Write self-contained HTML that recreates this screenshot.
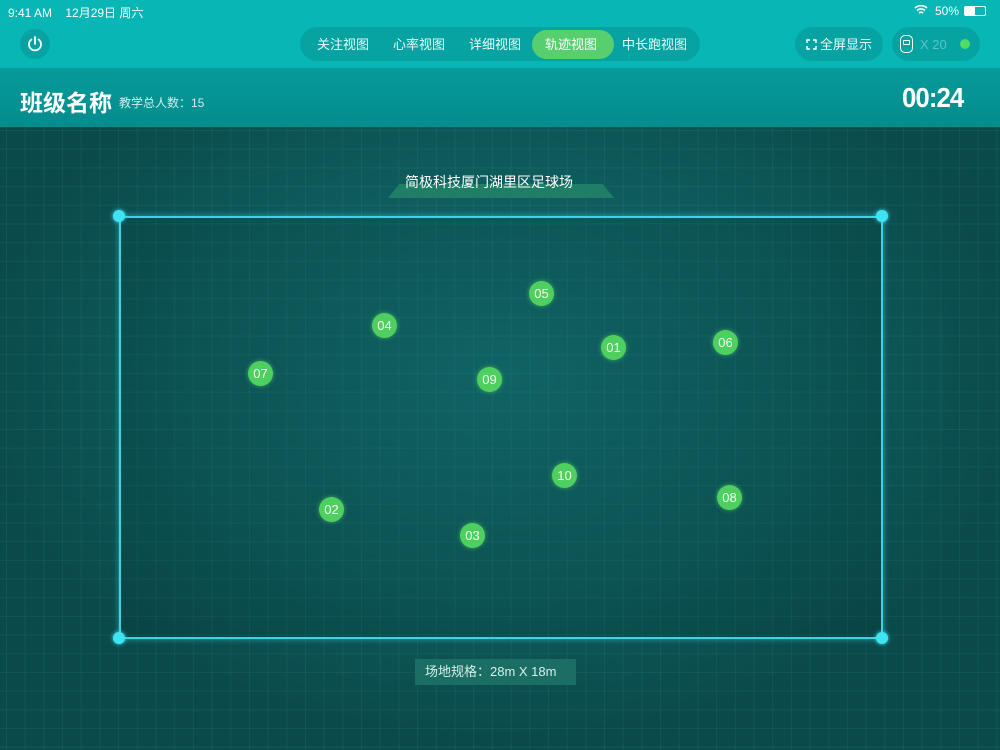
<!DOCTYPE html>
<html><head><meta charset="utf-8"><style>
*{margin:0;padding:0;box-sizing:border-box}
body{width:1000px;height:750px;overflow:hidden;font-family:"Liberation Sans","Noto Sans CJK SC",sans-serif;background:#0d5152;position:relative;color:#fff}
.top{position:absolute;left:0;top:0;width:1000px;height:68px;background:#07b6b5}
.hdr{position:absolute;left:0;top:68px;width:1000px;height:59px;background:linear-gradient(#069a9a,#058c8d)}
.bg{position:absolute;left:0;top:127px;width:1000px;height:623px;background:radial-gradient(ellipse 520px 360px at 500px 250px,#146d6e,#0e5a5b 60%,#0b4a4b);}
.grid{position:absolute;left:0;top:127px;width:1000px;height:623px;background-image:linear-gradient(rgba(80,200,200,.09) 1px,transparent 1px),linear-gradient(90deg,rgba(80,200,200,.09) 1px,transparent 1px);background-size:18.7px 18.7px;background-position:6px 3px}
.abs{position:absolute}
.pill{position:absolute;top:27px;height:34px;border-radius:17px;background:rgba(0,0,0,.1)}
.tab{position:absolute;top:31px;height:27px;line-height:27px;font-size:13px;color:#e8fbfb}
.field{position:absolute;left:119px;top:216px;width:764px;height:423px;border:2px solid #3ed3e2;box-shadow:0 0 6px rgba(62,211,226,.6);background:rgba(0,30,30,.12)}
.dot{position:absolute;width:12px;height:12px;border-radius:50%;background:#3fe4f2;box-shadow:0 0 4px #3fe4f2}
.b{position:absolute;width:25px;height:25px;border-radius:50%;background:#4fcf5f;box-shadow:0 0 5px rgba(80,210,95,.7);font-size:13px;line-height:25px;text-align:center;color:#f2fff2}
</style></head><body>
<div class="top"></div>
<div class="abs" style="left:8px;top:4px;font-size:12px">9:41 AM&nbsp;&nbsp;&nbsp;&nbsp;12月29日 周六</div>
<div class="abs" style="left:935px;top:4px;font-size:12px">50%</div>
<div class="abs" style="left:964px;top:6px;width:22px;height:10px;border:1px solid #fff;border-radius:2px"><div style="width:10px;height:8px;background:#fff"></div></div>
<svg class="abs" style="left:914px;top:4px" width="14" height="12" viewBox="0 0 14 12"><path d="M1 4a9 9 0 0 1 12 0M3 6.5a6 6 0 0 1 8 0M5 9a3 3 0 0 1 4 0" stroke="#fff" stroke-width="1.6" fill="none"/></svg>
<div class="abs" style="left:20px;top:29px;width:30px;height:30px;border-radius:50%;background:rgba(0,0,0,.1)"></div>
<svg class="abs" style="left:26px;top:35px" width="18" height="18" viewBox="0 0 18 18"><path d="M5.5 4.5a6 6 0 1 0 7 0M9 2v7" stroke="#fff" stroke-width="1.8" fill="none" stroke-linecap="round"/></svg>
<div class="pill" style="left:300px;width:400px"></div>
<div class="abs" style="left:532px;top:30px;width:82px;height:29px;border-radius:15px;background:#58cf6f"></div>
<div class="tab" style="left:317px">关注视图</div>
<div class="tab" style="left:393px">心率视图</div>
<div class="tab" style="left:469px">详细视图</div>
<div class="tab" style="left:545px;color:#fff">轨迹视图</div>
<div class="tab" style="left:622px">中长跑视图</div>
<div class="pill" style="left:795px;width:88px"></div>
<svg class="abs" style="left:806px;top:39px" width="11" height="11" viewBox="0 0 11 11"><path d="M1 4V1h3M7 1h3v3M10 7v3H7M4 10H1V7" stroke="#fff" stroke-width="1.4" fill="none"/></svg>
<div class="tab" style="left:820px">全屏显示</div>
<div class="pill" style="left:892px;width:88px"></div>
<div class="abs" style="left:900px;top:35px;width:13px;height:18px;border:1.5px solid #fff;border-radius:5px"><div style="margin:4px 2px;height:5px;border:1.3px solid #fff;border-radius:1px"></div></div>
<div class="tab" style="left:920px;color:rgba(255,255,255,.35)">X 20</div>
<div class="abs" style="left:960px;top:39px;width:10px;height:10px;border-radius:50%;background:#4fdc63"></div>
<div class="hdr"></div>
<div class="abs" style="left:20px;top:84px;font-size:23px;font-weight:bold">班级名称</div>
<div class="abs" style="left:119px;top:94px;font-size:12px;color:#cdeeee">教学总人数：15</div>
<div class="abs" style="left:902px;top:82px;font-size:28px;font-weight:bold;letter-spacing:-1px;transform:scaleX(.92);transform-origin:left">00:24</div>
<div class="bg"></div><div class="grid"></div>
<div class="abs" style="left:388px;top:184px;width:226px;height:14px;background:#1f7e66;clip-path:polygon(5% 0,95% 0,100% 100%,0 100%)"></div>
<div class="abs" style="left:405px;top:172px;font-size:14px">简极科技厦门湖里区足球场</div>
<div class="field"></div>
<div class="dot" style="left:113px;top:210px"></div><div class="dot" style="left:876px;top:210px"></div>
<div class="dot" style="left:113px;top:632px"></div><div class="dot" style="left:876px;top:632px"></div>
<div class="abs" style="left:415px;top:659px;width:161px;height:26px;background:#1a6e63;font-size:13px;line-height:26px;padding-left:10px;color:#d8efea">场地规格：28m X 18m</div>
<div class="b" style="left:529px;top:281px">05</div>
<div class="b" style="left:372px;top:313px">04</div>
<div class="b" style="left:601px;top:335px">01</div>
<div class="b" style="left:713px;top:330px">06</div>
<div class="b" style="left:248px;top:361px">07</div>
<div class="b" style="left:477px;top:367px">09</div>
<div class="b" style="left:552px;top:463px">10</div>
<div class="b" style="left:717px;top:485px">08</div>
<div class="b" style="left:319px;top:497px">02</div>
<div class="b" style="left:460px;top:523px">03</div>
</body></html>
